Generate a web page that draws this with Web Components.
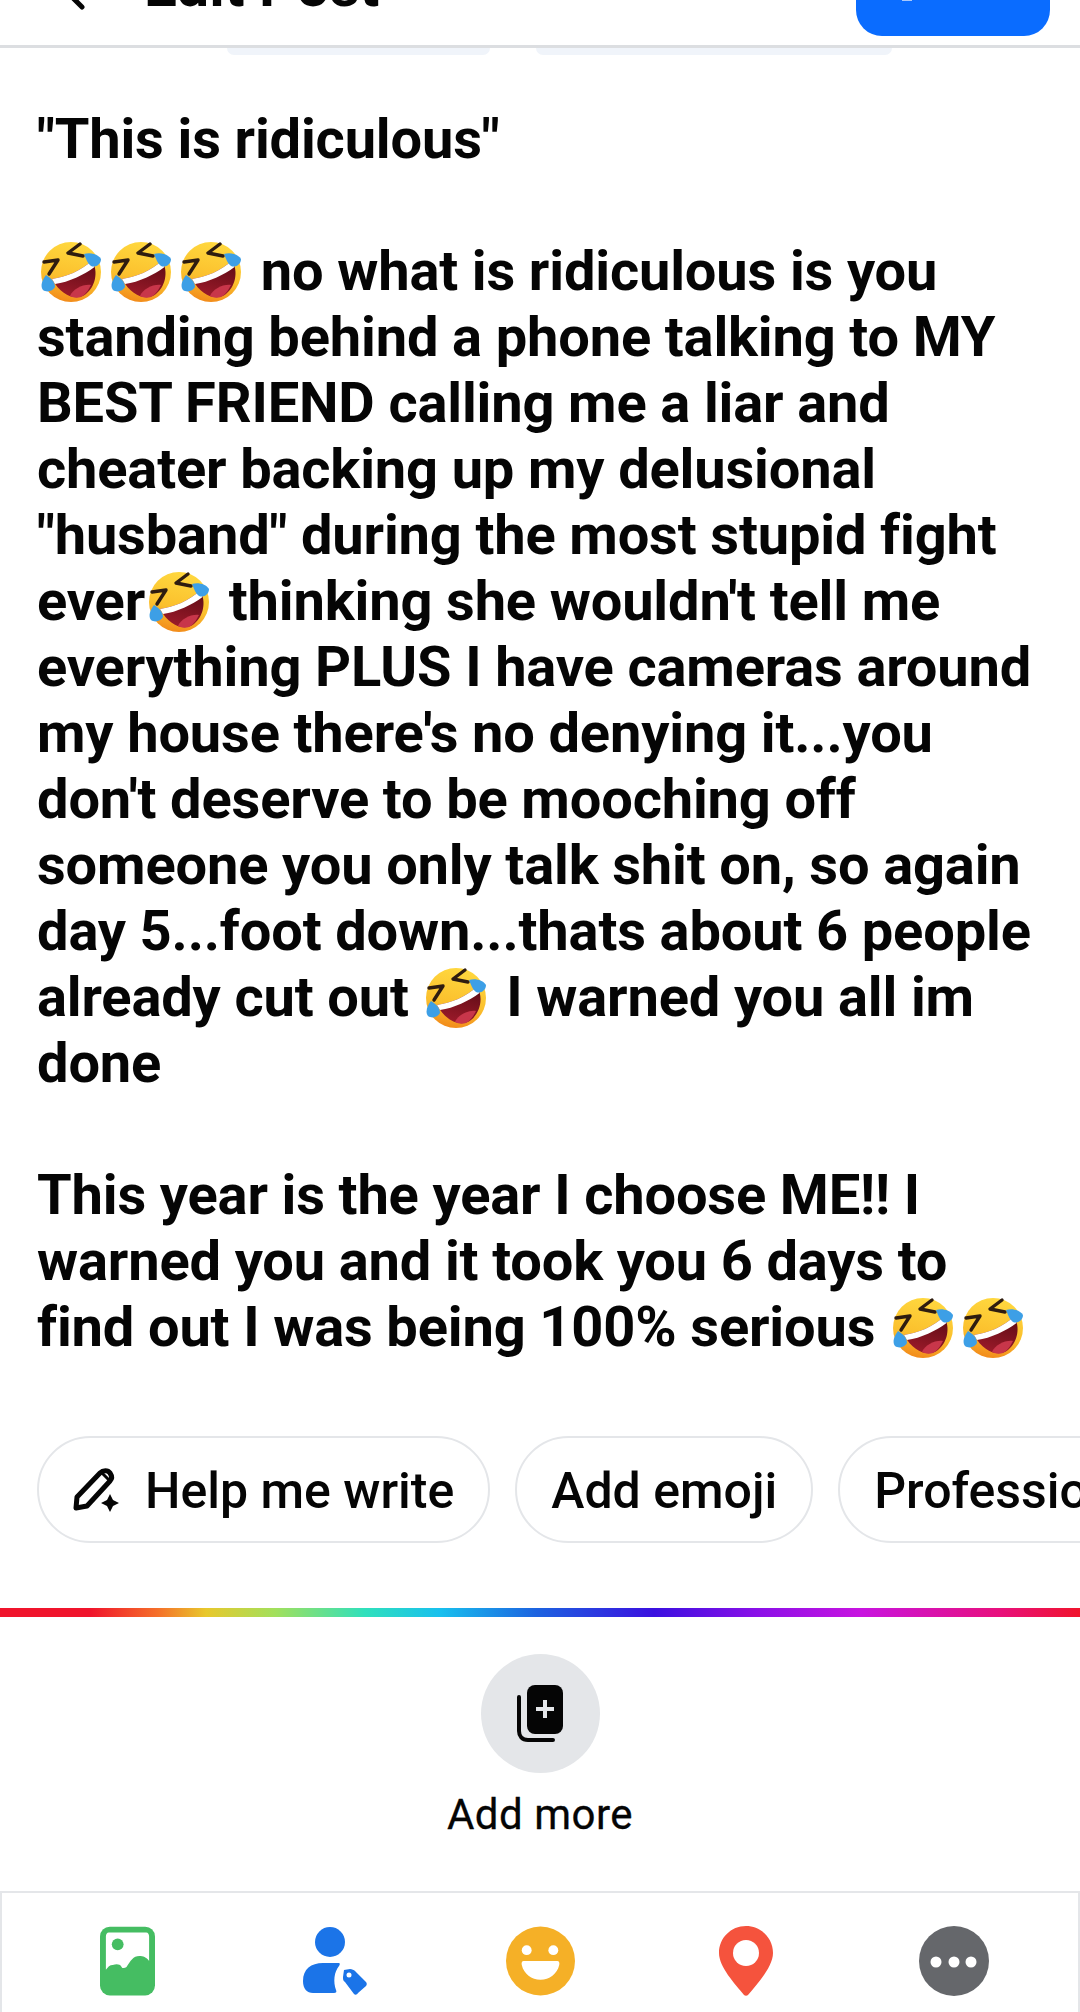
<!DOCTYPE html>
<html>
<head>
<meta charset="utf-8">
<style>
  html, body { margin: 0; background: #fff; }
  body { font-family: Roboto, "Liberation Sans", sans-serif; color: #050505; }
</style>
</head>
<body>
<post-editor>
  <edit-header slot="header" title="Edit Post"></edit-header>
  <post-body slot="body">"This is ridiculous"<br><br><rofl-emoji></rofl-emoji><rofl-emoji></rofl-emoji><rofl-emoji></rofl-emoji> no what is ridiculous is you<br>standing behind a phone talking to MY<br>BEST FRIEND calling me a liar and<br>cheater backing up my delusional<br>"husband" during the most stupid fight<br>ever<rofl-emoji></rofl-emoji> thinking she wouldn't tell me<br>everything PLUS I have cameras around<br>my house there's no denying it...you<br>don't deserve to be mooching off<br>someone you only talk shit on, so again<br>day 5...foot down...thats about 6 people<br>already cut out <rofl-emoji></rofl-emoji> I warned you all im<br>done<br><br>This year is the year I choose ME!! I<br>warned you and it took you 6 days to<br>find out I was being 100% serious <rofl-emoji></rofl-emoji><rofl-emoji></rofl-emoji></post-body>
  <chip-row slot="chips">
    <ai-chip icon>Help me write</ai-chip>
    <ai-chip>Add emoji</ai-chip>
    <ai-chip>Professional</ai-chip>
  </chip-row>
  <rainbow-bar slot="bar"></rainbow-bar>
  <add-more slot="more">Add more</add-more>
  <composer-toolbar slot="toolbar"></composer-toolbar>
</post-editor>

<script>
// Contenedor general de la pantalla
class PostEditor extends HTMLElement {
  constructor() {
    super();
    this.attachShadow({ mode: "open" });
    this.shadowRoot.innerHTML = `
      <style>
        :host { display: flex; flex-direction: column; width: 1080px; height: 2012px; overflow: hidden; }
        .spacer { flex: 1; }
      </style>
      <slot name="header"></slot>
      <slot name="body"></slot>
      <slot name="chips"></slot>
      <slot name="bar"></slot>
      <slot name="more"></slot>
      <div class="spacer"></div>
      <slot name="toolbar"></slot>
    `;
  }
}

// Cabecera recortada por arriba, solo se ve la parte baja
class EditHeader extends HTMLElement {
  constructor() {
    super();
    this.attachShadow({ mode: "open" });
    this.shadowRoot.innerHTML = `
      <style>
        :host { display: block; position: relative; height: 58px; overflow: hidden; }
        .bar {
          height: 48px; box-sizing: border-box; border-bottom: 3px solid #dcdee1;
          display: flex; align-items: flex-end; overflow: hidden; padding-left: 144px;
        }
        .title { font-size: 58.5px; font-weight: 700; line-height: 66px; margin-bottom: 26px; white-space: nowrap; }
        .back { position: absolute; left: 62px; top: -30px; }
        .btn { position: absolute; left: 856px; top: -40px; width: 194px; height: 76px; background: #0a6cff; border-radius: 26px; }
        .btn::after { content: ""; position: absolute; left: 46px; top: 40px; width: 10px; height: 1px; background: #a9c8fb; }
        .tabs { display: flex; height: 8px; padding-left: 227px; gap: 46px; }
        .tabs i { display: block; height: 7px; background: #f0f4fa; border-radius: 0 0 8px 8px; }
      </style>
      <div class="bar"><span class="title"></span></div>
      <svg class="back" width="34" height="40" viewBox="0 0 34 40" fill="none" stroke="#050505" stroke-width="5" stroke-linecap="round"><path d="M24 8 L9 26 L20 37"/></svg>
      <div class="btn"></div>
      <div class="tabs"><i style="width:263px"></i><i style="width:356px"></i></div>
    `;
    this.shadowRoot.querySelector(".title").textContent = this.getAttribute("title");
  }
}

// Texto principal de la publicacion
class PostBody extends HTMLElement {
  constructor() {
    super();
    this.attachShadow({ mode: "open" });
    this.shadowRoot.innerHTML = `
      <style>
        :host {
          display: block; padding: 48px 0 0 37px; height: 1378px; box-sizing: border-box;
          font-size: 56px; font-weight: 700; line-height: 66px; white-space: nowrap; letter-spacing: -0.15px;
        }
      </style>
      <slot></slot>
    `;
  }
}

// Emoji de risa dibujado a mano
class RoflEmoji extends HTMLElement {
  constructor() {
    super();
    this.attachShadow({ mode: "open" });
    this.shadowRoot.innerHTML = `
      <style>
        :host { display: inline-block; width: 62px; height: 62px; margin: 0 5px 0 3px; vertical-align: -13px; }
        svg { display: block; }
      </style>
      <svg width="62" height="62" viewBox="0 0 62 62">
        <defs>
          <linearGradient id="f" x1="0.6" y1="0" x2="0.4" y2="1"><stop offset="0" stop-color="#ffd83f"/><stop offset="0.6" stop-color="#fbc02d"/><stop offset="1" stop-color="#f28a1a"/></linearGradient>
          <linearGradient id="m" x1="0.7" y1="0" x2="0.4" y2="1"><stop offset="0" stop-color="#5e0c15"/><stop offset="1" stop-color="#9c1a2a"/></linearGradient>
        </defs>
        <circle cx="31" cy="31" r="30" fill="url(#f)"/>
        <path d="M12 38 C25 36 42 30 52 19 C59 31 55 46 46 53 C37 60 22 56 12 38 Z" fill="url(#m)"/>
        <path d="M30 55 C33 48 43 43 51 44 C49 48 47 51 44 54 C39 58 34 57 30 55 Z" fill="#c8364a"/>
        <path d="M12 38 C25 36 42 30 52 19 C53 22 54 24 54.5 26 C44 34 29 41 15 43 Z" fill="#fff"/>
        <path d="M40 3 L28 12 L43 15" fill="none" stroke="#2e1c10" stroke-width="3.4" stroke-linejoin="round" stroke-linecap="round"/>
        <path d="M4 21 L18 19 L9 33" fill="none" stroke="#2e1c10" stroke-width="3.4" stroke-linejoin="round" stroke-linecap="round"/>
        <path d="M44 13 C50 11 58 13 61 18 C61 23 56 27 51 25 C48 23 46 18 44 13 Z" fill="#3d9fe6"/>
        <path d="M6 34 C2 39 0 45 3 49 C7 52 13 50 15 46 C15 41 11 37 6 34 Z" fill="#3d9fe6"/>
      </svg>
    `;
  }
}

class ChipRow extends HTMLElement {
  constructor() {
    super();
    this.attachShadow({ mode: "open" });
    this.shadowRoot.innerHTML = `
      <style>
        :host { display: flex; gap: 25px; padding-left: 37px; height: 107px; overflow: hidden; margin-bottom: 65px; }
      </style>
      <slot></slot>
    `;
  }
}

class AiChip extends HTMLElement {
  constructor() {
    super();
    this.attachShadow({ mode: "open" });
    const icon = this.hasAttribute("icon") ? `
      <svg width="46" height="46" viewBox="0 0 46 46" fill="none">
        <path d="M3 41 L4 30 L27 6 C30 3 35 3 37 6 C39 9 39 12 37 14 L14 39 Z" stroke="#050505" stroke-width="5" stroke-linejoin="round"/>
        <path d="M29 6 L36 13" stroke="#050505" stroke-width="3"/>
        <path d="M37 27 L40 33 L46 36 L40 39 L37 45 L34 39 L28 36 L34 33 Z" fill="#050505"/>
      </svg>` : "";
    this.shadowRoot.innerHTML = `
      <style>
        :host {
          display: flex; flex: none; align-items: center; gap: 26px; box-sizing: border-box; height: 107px;
          padding: 2px 34px 0; border: 2px solid #e4e6e9; border-radius: 54px;
          font-size: 50px; font-weight: 500; white-space: nowrap;
        }
        svg { flex: none; margin-top: -2px; }
      </style>
      ${icon}<slot></slot>
    `;
  }
}

class RainbowBar extends HTMLElement {
  constructor() {
    super();
    this.attachShadow({ mode: "open" });
    this.shadowRoot.innerHTML = `
      <style>
        :host {
          display: block; height: 9px;
          background: linear-gradient(90deg, #f0142c 0, #f0142c 90px, #f5702a 158px, #e8c82c 206px, #a2e05c 275px,
            #2fe0bc 365px, #18c0ee 440px, #1c62e0 537px, #3a10e0 654px, #8a10e8 757px, #c814e0 861px, #e8107c 1000px, #f0142c 1080px);
        }
      </style>
    `;
  }
}

class AddMore extends HTMLElement {
  constructor() {
    super();
    this.attachShadow({ mode: "open" });
    this.shadowRoot.innerHTML = `
      <style>
        :host { display: flex; flex-direction: column; align-items: center; padding-top: 37px; font-size: 42px; letter-spacing: 0.5px; -webkit-text-stroke: 0.3px #050505; }
        .circle { width: 119px; height: 119px; border-radius: 50%; background: #e4e6e9; display: flex; align-items: center; justify-content: center; margin-bottom: 15px; }
        .label { line-height: 54px; }
      </style>
      <div class="circle">
        <svg width="46" height="58" viewBox="0 0 46 58">
          <rect x="10" y="0" width="36" height="49" rx="8" fill="#050505"/>
          <path d="M28 15 V33 M19 24 H37" stroke="#e4e6e9" stroke-width="4"/>
          <path d="M2 12 V46 C2 51 5 55 11 55 H36" fill="none" stroke="#050505" stroke-width="4" stroke-linecap="round"/>
        </svg>
      </div>
      <div class="label"><slot></slot></div>
    `;
  }
}

class ComposerToolbar extends HTMLElement {
  constructor() {
    super();
    this.attachShadow({ mode: "open" });
    this.shadowRoot.innerHTML = `
      <style>
        :host {
          display: flex; box-sizing: border-box; height: 121px;
          align-items: flex-start; padding: 33px 0 0 98px; border: 2px solid #e4e6e9; border-bottom: 0;
        }
        svg { display: block; flex: none; }
      </style>
      <svg width="55" height="70" viewBox="0 0 56 70">
        <rect width="56" height="70" rx="10" fill="#45bd62"/>
        <path d="M6 10 C6 8 7 6 9 6 H47 C49 6 50 8 50 10 V35 C47 31 44 30 40 30 C34 30 31 35 27 41 C25 42 23 43 22 41 C20 38 17 38 13 39 C10 39 8 41 6 44 Z" fill="#fff"/>
        <circle cx="18" cy="18" r="6" fill="#45bd62"/>
      </svg>
      <svg width="64" height="68" viewBox="0 0 64 68" style="margin:1px 0 0 148px">
        <circle cx="27" cy="15" r="15" fill="#1b74e8"/>
        <path d="M0 54 C0 42 8 36 20 36 H36 C37 36 37 38 36 39 C31 45 30 55 33 63 C34 65 33 66 31 66 H10 C4 66 0 62 0 54 Z" fill="#1b74e8"/>
        <path d="M41 43 L47 42 C49 42 51 43 52 44 L63 55 C64 56 64 58 63 59 L55 66 C54 68 52 68 51 67 L42 55 C40 54 40 52 40 50 Z" fill="#1b74e8"/>
        <circle cx="46" cy="48" r="2.5" fill="#fff"/>
      </svg>
      <svg width="69" height="70" viewBox="0 0 70 70" style="margin-left:139px">
        <circle cx="35" cy="35" r="35" fill="#f5b027"/>
        <circle cx="21" cy="24" r="5" fill="#fff"/>
        <circle cx="48" cy="24" r="5" fill="#fff"/>
        <path d="M18 35 H52 C54 35 54.5 37 54 39 C52 48 44 54 35 54 C26 54 18 48 16 39 C15.5 37 16 35 18 35 Z" fill="#fff"/>
      </svg>
      <svg width="54" height="70" viewBox="0 0 54 70" style="margin-left:144px">
        <path d="M27 0 C42 0 54 12 54 27 C54 41 38 58 29 69 C28 70 26 70 25 69 C16 58 0 41 0 27 C0 12 12 0 27 0 Z" fill="#f5533d"/>
        <circle cx="27" cy="27" r="13" fill="#fff"/>
      </svg>
      <svg width="70" height="70" viewBox="0 0 70 70" style="margin-left:146px">
        <circle cx="35" cy="35" r="35" fill="#65676b"/>
        <circle cx="17" cy="36" r="5.5" fill="#fff"/>
        <circle cx="35" cy="36" r="5.5" fill="#fff"/>
        <circle cx="52" cy="36" r="5.5" fill="#fff"/>
      </svg>
    `;
  }
}

customElements.define("post-editor", PostEditor);
customElements.define("edit-header", EditHeader);
customElements.define("post-body", PostBody);
customElements.define("rofl-emoji", RoflEmoji);
customElements.define("chip-row", ChipRow);
customElements.define("ai-chip", AiChip);
customElements.define("rainbow-bar", RainbowBar);
customElements.define("add-more", AddMore);
customElements.define("composer-toolbar", ComposerToolbar);
</script>
</body>
</html>
